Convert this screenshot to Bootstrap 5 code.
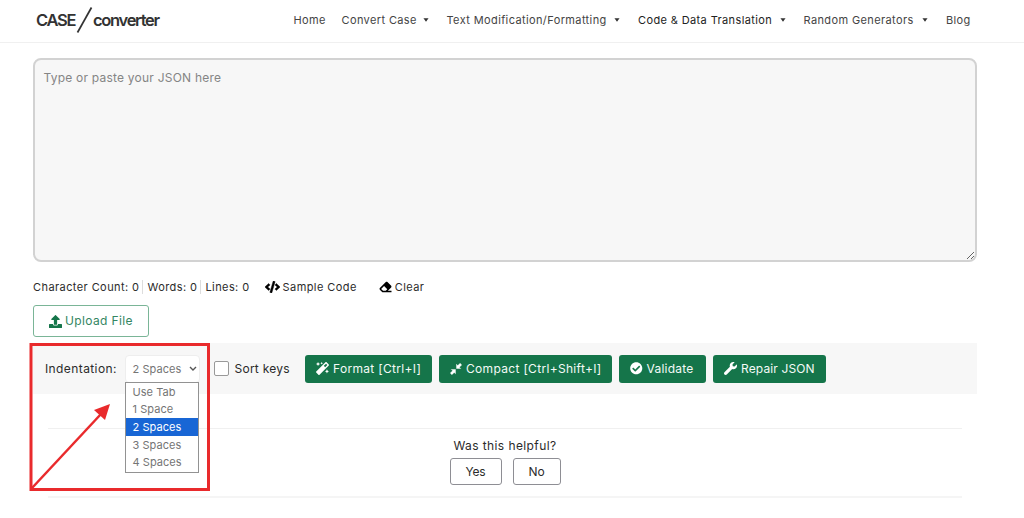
<!DOCTYPE html>
<html lang="en">
<head>
<meta charset="utf-8">
<meta name="viewport" content="width=device-width, initial-scale=1">
<title>JSON Formatter - Case Converter</title>
<link href="https://cdn.jsdelivr.net/npm/bootstrap@5.3.0/dist/css/bootstrap.min.css" rel="stylesheet">
<style>
body{font-family:Inter,"Liberation Sans",sans-serif;font-size:12px;line-height:18px;letter-spacing:.4px;color:#2b2b2b;overflow:hidden}
svg{flex:none}
.site-head{height:43px;border-bottom:1px solid #f0f0f0;padding:0 0 3px 36px}
.brand{width:257.5px;font-size:16.5px;color:#333;height:40px}
.brand b{font-weight:600}
.brand .up{letter-spacing:-1.25px;width:40px}
.brand .low{letter-spacing:-1.3px}
.menu{display:grid;grid-template-columns:48px 105px 191.5px 165.5px 142.5px auto;font-size:11px;letter-spacing:.38px}
.menu a{color:#444;text-decoration:none;display:flex;align-items:center;white-space:nowrap}
.menu a.drop::after{content:"";margin:1px 18px 0 auto;border:2.5px solid transparent;border-width:4px 3px 0;border-top-color:#333;transform:scale(.85)}
.menu a.on{color:#222}
main{padding:15px 47px 0 33px}
.source{height:204px;border:2px solid #d2d2d2;border-radius:8px;background:#f7f7f7;padding:9px 9px 9px 8.5px;font-size:12px;letter-spacing:.22px;color:#2b2b2b;resize:vertical;display:block;width:100%;outline:0}
.source::placeholder{color:#858585}
.stats{height:18px;margin-top:16px;font-size:11px;letter-spacing:.42px;white-space:nowrap}
.stats .sep{width:1px;height:14px;background:#ddd;margin:0 4px 0 3px}
.upload{width:116px;height:32px;margin-top:9px;border:1px solid #7ab597;border-radius:3px;color:#348662;background:#fff;padding:0 0 0 15px;gap:3px;letter-spacing:.37px}
.tools{height:51px;margin-top:6px;background:#f7f7f7;padding-left:12px;white-space:nowrap}
.indent{width:75px;height:28px;margin-left:6.500px}
.pick{height:28px;border:1px solid #eee;border-radius:4px;background:#fff;color:#757575;font-size:11px;letter-spacing:.05px;padding:0 2px 0 7px}
.choices{top:27px;left:0;width:74.500px;height:91px;background:#fff;border:1px solid #929292;color:#757575;font-size:11px;letter-spacing:.05px;z-index:2}
.choices div{height:17.7px;line-height:19px;padding-left:7px}
.choices .sel{background:#1866d5;color:#fff}
.check{width:15px;height:15px;border:1px solid #999;border-radius:2px;background:#fff;margin:0 6px 0 14px}
.act{height:28px;border:0;border-radius:3px;background:#15754a;color:#f4faf7;padding:0 0 0 11px;display:flex;align-items:center;gap:4px;margin-left:7px;letter-spacing:.25px}
.wide{letter-spacing:.32px}
.feedback{margin:34px 15px 0;height:70px;border-top:1px solid #f0f0f0;border-bottom:2px solid #f5f5f5;padding-top:8px}
.vote{height:27px;border:1px solid #8e8e94;border-radius:3px;background:#fff;color:#2b2b2b;letter-spacing:-.2px}
.callout{left:29px;top:342px;z-index:3;pointer-events:none}
</style>
</head>
<body class="bg-white position-relative">
<header class="site-head d-flex align-items-center">
  <div class="brand d-flex align-items-center">
    <b class="up">CASE</b>
    <svg width="17" height="28" viewBox="0 0 17 28"><path d="M1.500 26.500 15.500 1.500" stroke="#333" stroke-width="1.700"/></svg>
    <b class="low">converter</b>
  </div>
  <nav class="menu">
    <a href="#">Home</a><a href="#" class="drop">Convert Case</a><a href="#" class="drop">Text Modification/Formatting</a><a href="#" class="drop on">Code &amp; Data Translation</a><a href="#" class="drop">Random Generators</a><a href="#">Blog</a>
  </nav>
</header>
<main>
  <textarea class="source" placeholder="Type or paste your JSON here"></textarea>
  <div class="stats d-flex align-items-center">
    <span>Character Count: 0</span><i class="sep"></i><span>Words: 0</span><i class="sep"></i><span>Lines: 0</span>
    <svg style="margin:0 3px 0 15px" width="15" height="12" viewBox="0 0 640 512"><path fill="#000" stroke="#000" stroke-width="18" d="M278.900 511.500l-61-17.700c-6.400-1.800-10-8.500-8.200-14.900L346.200 8.700c1.800-6.400 8.500-10 14.900-8.200l61 17.700c6.400 1.800 10 8.500 8.200 14.900L293.800 503.300c-1.900 6.400-8.500 10.100-14.900 8.200zm-114-112.200l43.500-46.400c4.600-4.900 4.300-12.700-.8-17.200L117 256l90.600-79.700c5.100-4.500 5.500-12.300.8-17.200l-43.500-46.400c-4.500-4.800-12.100-5.100-17-.5L3.800 247.200c-5.100 4.700-5.100 12.800 0 17.500l144.100 135.100c4.900 4.600 12.500 4.400 17-.5zm327.200.6l144.100-135.100c5.100-4.700 5.100-12.800 0-17.500L492.100 112.100c-4.800-4.500-12.400-4.300-17 .5L431.600 159c-4.600 4.900-4.300 12.700.8 17.200L523 256l-90.600 79.700c-5.100 4.500-5.500 12.300-.8 17.200l43.500 46.400c4.500 4.900 12.100 5.100 17 .6z"/></svg>
    <span>Sample Code</span>
    <svg style="margin:0 3px 0 22px" width="13" height="12" viewBox="0 0 512 512"><path fill="#000" d="M497.900 273.900c18.700-18.700 18.700-49.100 0-67.900l-160-160c-18.700-18.700-49.100-18.700-67.900 0l-256 256c-18.700 18.700-18.700 49.100 0 67.900l96 96A48 48 0 0 0 144 480h356c6.600 0 12-5.400 12-12v-40c0-6.600-5.400-12-12-12H355.900l142-142.100zM195.300 211.300l137.400 137.400L265.400 416H150.600l-80-80 124.700-124.700z"/></svg>
    <span>Clear</span>
  </div>
  <button class="upload d-flex align-items-center">
    <svg width="13" height="13" viewBox="0 0 512 512"><path fill="#15754a" d="M296 384h-80c-13.300 0-24-10.700-24-24V192h-87.700c-17.800 0-26.700-21.500-14.100-34.100L242.300 5.700c7.500-7.500 19.800-7.500 27.300 0l152.200 152.200c12.600 12.600 3.700 34.100-14.100 34.100H320v168c0 13.300-10.700 24-24 24zm216-8v112c0 13.300-10.700 24-24 24H24c-13.300 0-24-10.700-24-24V376c0-13.300 10.700-24 24-24h136v8c0 30.900 25.100 56 56 56h80c30.900 0 56-25.100 56-56v-8h136c13.300 0 24 10.700 24 24z"/></svg>
    <span>Upload File</span>
  </button>
  <section class="tools d-flex align-items-center">
    <span style="width:73px">Indentation:</span>
    <div class="indent position-relative">
      <div class="pick d-flex align-items-center justify-content-between">2 Spaces
        <svg width="8" height="6" viewBox="0 0 8 6"><path d="M1 1l3 3 3-3" fill="none" stroke="#555" stroke-width="1.400"/></svg></div>
      <div class="choices position-absolute"><div>Use Tab</div><div>1 Space</div><div class="sel">2 Spaces</div><div>3 Spaces</div><div>4 Spaces</div></div>
    </div>
    <i class="check"></i><span style="width:56px;letter-spacing:.25px">Sort keys</span>
    <button class="act" style="width:127px;margin-left:14.500px"><svg width="13" height="13" viewBox="0 0 512 512"><path fill="#fff" d="M224 96l16-32 32-16-32-16-16-32-16 32-32 16 32 16 16 32zM80 160l26.700-53.300L160 80l-53.300-26.700L80 0 53.300 53.300 0 80l53.300 26.700L80 160zm352 128l-26.700 53.300L352 368l53.300 26.700L432 448l26.700-53.300L512 368l-53.300-26.700L432 288zm70.600-193.800L417.800 9.400C411.500 3.100 403.300 0 395.200 0c-8.200 0-16.400 3.100-22.600 9.400L9.400 372.500c-12.500 12.500-12.500 32.800 0 45.300l84.900 84.900c6.300 6.300 14.400 9.400 22.600 9.400 8.200 0 16.400-3.100 22.600-9.400l363.100-363.200c12.500-12.500 12.500-32.800 0-45.300zM359.500 203.500l-50.900-50.900 86.600-86.600 50.900 50.900-86.600 86.600z"/></svg><span class="wide">Format [Ctrl+I]</span></button>
    <button class="act" style="width:173px"><svg width="12" height="12" viewBox="0 0 12 12"><path fill="#fff" stroke="#fff" stroke-width=".4" d="M6.500 1.300V5.500h4.200L9.400 4.200l2.300-2.300L10.100.3 7.800 2.600zM5.500 10.700V6.500H1.300l1.300 1.300-2.300 2.300 1.600 1.600 2.300-2.300z"/></svg><span class="wide">Compact [Ctrl+Shift+I]</span></button>
    <button class="act" style="width:87px"><svg width="12.500" height="12.500" viewBox="0 0 512 512"><path fill="#fff" d="M504 256c0 137-111 248-248 248S8 393 8 256 119 8 256 8s248 111 248 248zM227.300 387.300l184-184c6.200-6.200 6.200-16.400 0-22.600l-22.600-22.600c-6.200-6.200-16.400-6.200-22.600 0L216 308.100l-70.100-70.100c-6.200-6.200-16.400-6.200-22.600 0l-22.600 22.600c-6.200 6.200-6.200 16.400 0 22.600l104 104c6.200 6.300 16.400 6.300 22.600.1z"/></svg>Validate</button>
    <button class="act" style="width:113px"><svg width="13" height="13" viewBox="0 0 512 512"><path fill="#fff" d="M507.700 109.100c-2.200-9-13.500-12.100-20.100-5.500l-74.400 74.400-67.900-11.300L334 98.900l74.400-74.400c6.600-6.600 3.400-17.900-5.700-20.200-47.400-11.700-99.600.9-136.600 37.900-39.600 39.600-50.500 97.100-34.100 147.200L18.700 402.800c-25 25-25 65.500 0 90.500s65.500 25 90.500 0l213.200-213.200c50.100 16.700 107.500 5.700 147.400-34.200 37.100-37.100 49.700-89.300 37.900-136.800z"/></svg><span style="letter-spacing:.13px">Repair JSON</span></button>
  </section>
  <section class="feedback text-center">
    <div>Was this helpful?</div>
    <div class="d-flex justify-content-center" style="gap:11px;margin-top:3px"><button class="vote" style="width:52px">Yes</button><button class="vote" style="width:48px">No</button></div>
  </section>
</main>
<svg class="callout position-absolute" width="182" height="150" viewBox="0 0 182 150"><rect x="2" y="2.500" width="177.500" height="145" fill="none" stroke="#e92a2c" stroke-width="3"/><path d="M3 146 72 72" stroke="#e92a2c" stroke-width="2.500"/><path d="M81 62 76 78 65 68z" fill="#e92a2c"/></svg>
</body>
</html>
